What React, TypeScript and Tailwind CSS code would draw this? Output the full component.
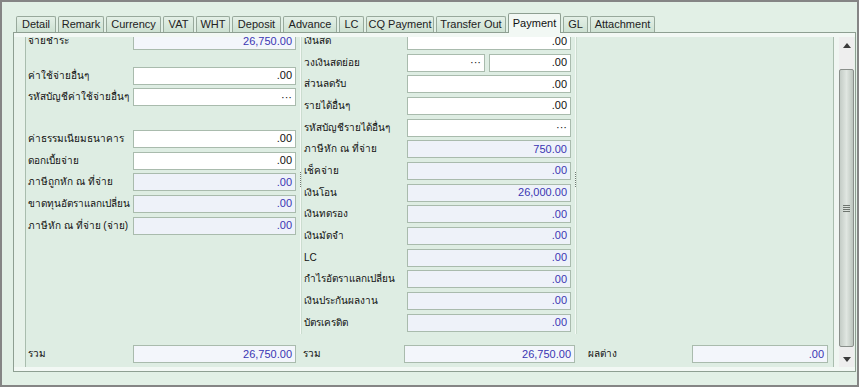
import React from "react";

type Kind = "edit" | "ro" | "sum";

const tabs = [
  { name: "Detail", w: "w-[40px]" },
  { name: "Remark", w: "w-[46px]" },
  { name: "Currency", w: "w-[55px]" },
  { name: "VAT", w: "w-[31px]" },
  { name: "WHT", w: "w-[34px]" },
  { name: "Deposit", w: "w-[49px]" },
  { name: "Advance", w: "w-[54px]" },
  { name: "LC", w: "w-[25px]" },
  { name: "CQ Payment", w: "w-[68px]" },
  { name: "Transfer Out", w: "w-[70px]" },
  { name: "Payment", w: "w-[53px]", active: true },
  { name: "GL", w: "w-[25px]" },
  { name: "Attachment", w: "w-[65px]" },
];

// one text box, right aligned like the desktop form
const Box: React.FC<{ value: string; kind: Kind; w: string }> = ({ value, kind, w }) => {
  const tone =
    kind === "edit"
      ? "bg-white text-[#111]"
      : kind === "sum"
      ? "bg-[#f3f6fb] text-[#3a35b3]"
      : "bg-[#eef2f9] text-[#3a35b3]";
  return (
    <div
      className={`${w} h-[18px] shrink-0 border border-[#a9bbad] ${tone} flex items-center justify-end pr-[3px] text-[11px] leading-none`}
    >
      {value}
    </div>
  );
};

const Row: React.FC<{ label: string; lw: string; children: React.ReactNode; extra?: string }> = ({
  label,
  lw,
  children,
  extra = "",
}) => (
  <div className={`flex items-center h-[18px] ${extra}`}>
    <div className={`${lw} shrink-0 whitespace-nowrap text-[10px] leading-none text-[#111]`}>{label}</div>
    {children}
  </div>
);

const Grip = () => (
  <div className="w-[2px] shrink-0 flex flex-col bg-[#f4f9f5] border-r border-[#cbdccf]">
    <div className="h-[135px]" />
    <div className="h-[15px] border-l border-dotted border-[#6f7a72]" />
  </div>
);

const Arrow: React.FC<{ up?: boolean }> = ({ up }) => (
  <svg width="8" height="5" viewBox="0 0 8 5">
    <polygon points={up ? "0,5 8,5 4,0" : "0,0 8,0 4,5"} fill="#3b3b3b" />
  </svg>
);

export default function App() {
  return (
    <div className="w-[859px] h-[387px] overflow-hidden bg-[#e2f0e6] border-2 border-[#858585] flex flex-col font-['Liberation_Sans','Noto_Sans',sans-serif] text-black">
      {/* tab strip */}
      <div className="h-[30px] shrink-0 flex items-end gap-[2px] pl-[14px] relative z-10">
        {tabs.map((t) =>
          t.active ? (
            <div
              key={t.name}
              className={`${t.w} h-[20px] -mb-[1px] border border-b-0 border-[#8e9f92] bg-[#f2f8f4] flex items-center justify-center text-[11px] text-[#111] rounded-t-[2px]`}
            >
              {t.name}
            </div>
          ) : (
            <div
              key={t.name}
              className={`${t.w} h-[16px] border border-b-0 border-[#98a99c] bg-gradient-to-b from-[#e4f0e7] to-[#cde1d2] flex items-center justify-center text-[11px] text-[#222] rounded-t-[2px]`}
            >
              {t.name}
            </div>
          )
        )}
      </div>

      {/* tab page */}
      <div className="ml-[11px] mr-[1px] h-[340px] shrink-0 border border-[#8e9f92] bg-[#e7f2ea] flex flex-col">
        <div className="h-[4px] bg-[#f2f8f4]" />
        <div className="h-[330px] flex pl-[11px]">
          <div className="w-[809px] border-l border-r border-[#a9bdae] bg-[#deede3] flex flex-col">
            {/* columns */}
            <div className="h-[297px] flex overflow-hidden">
              {/* left */}
              <div className="w-[274px] shrink-0 pl-[2px] pr-[3px]">
                <div className="-mt-[5px] flex flex-col gap-[3.67px]">
                  <Row label="จ่ายชำระ" lw="w-[105px]">
                    <Box value="26,750.00" kind="sum" w="w-[163px]" />
                  </Row>
                  <Row label="ค่าใช้จ่ายอื่นๆ" lw="w-[105px]" extra="mt-[13px]">
                    <Box value=".00" kind="edit" w="w-[163px]" />
                  </Row>
                  <Row label="รหัสบัญชีค่าใช้จ่ายอื่นๆ" lw="w-[105px]">
                    <Box value="···" kind="edit" w="w-[163px]" />
                  </Row>
                  <Row label="ค่าธรรมเนียมธนาคาร" lw="w-[105px]" extra="mt-[20px]">
                    <Box value=".00" kind="edit" w="w-[163px]" />
                  </Row>
                  <Row label="ดอกเบี้ยจ่าย" lw="w-[105px]">
                    <Box value=".00" kind="edit" w="w-[163px]" />
                  </Row>
                  <Row label="ภาษีถูกหัก ณ ที่จ่าย" lw="w-[105px]">
                    <Box value=".00" kind="ro" w="w-[163px]" />
                  </Row>
                  <Row label="ขาดทุนอัตราแลกเปลี่ยน" lw="w-[105px]">
                    <Box value=".00" kind="ro" w="w-[163px]" />
                  </Row>
                  <Row label="ภาษีหัก ณ ที่จ่าย (จ่าย)" lw="w-[105px]">
                    <Box value=".00" kind="ro" w="w-[163px]" />
                  </Row>
                </div>
              </div>

              <Grip />

              {/* middle */}
              <div className="w-[273px] shrink-0 pl-[2px] pr-[4px]">
                <div className="-mt-[5px] flex flex-col gap-[3.67px]">
                  <Row label="เงินสด" lw="w-[103px]">
                    <Box value=".00" kind="edit" w="w-[164px]" />
                  </Row>
                  <Row label="วงเงินสดย่อย" lw="w-[103px]">
                    <Box value="···" kind="edit" w="w-[78px]" />
                    <div className="w-[4px] shrink-0" />
                    <Box value=".00" kind="edit" w="w-[82px]" />
                  </Row>
                  <Row label="ส่วนลดรับ" lw="w-[103px]">
                    <Box value=".00" kind="edit" w="w-[164px]" />
                  </Row>
                  <Row label="รายได้อื่นๆ" lw="w-[103px]">
                    <Box value=".00" kind="edit" w="w-[164px]" />
                  </Row>
                  <Row label="รหัสบัญชีรายได้อื่นๆ" lw="w-[103px]">
                    <Box value="···" kind="edit" w="w-[164px]" />
                  </Row>
                  <Row label="ภาษีหัก ณ ที่จ่าย" lw="w-[103px]">
                    <Box value="750.00" kind="ro" w="w-[164px]" />
                  </Row>
                  <Row label="เช็คจ่าย" lw="w-[103px]">
                    <Box value=".00" kind="ro" w="w-[164px]" />
                  </Row>
                  <Row label="เงินโอน" lw="w-[103px]">
                    <Box value="26,000.00" kind="ro" w="w-[164px]" />
                  </Row>
                  <Row label="เงินทดรอง" lw="w-[103px]">
                    <Box value=".00" kind="ro" w="w-[164px]" />
                  </Row>
                  <Row label="เงินมัดจำ" lw="w-[103px]">
                    <Box value=".00" kind="ro" w="w-[164px]" />
                  </Row>
                  <Row label="LC" lw="w-[103px]">
                    <Box value=".00" kind="ro" w="w-[164px]" />
                  </Row>
                  <Row label="กำไรอัตราแลกเปลี่ยน" lw="w-[103px]">
                    <Box value=".00" kind="ro" w="w-[164px]" />
                  </Row>
                  <Row label="เงินประกันผลงาน" lw="w-[103px]">
                    <Box value=".00" kind="ro" w="w-[164px]" />
                  </Row>
                  <Row label="บัตรเครดิต" lw="w-[103px]">
                    <Box value=".00" kind="ro" w="w-[164px]" />
                  </Row>
                </div>
              </div>

              <Grip />

              {/* right, empty */}
              <div className="flex-1" />
            </div>

            {/* totals */}
            <div className="h-[33px] flex items-start pt-[11px] pl-[2px]">
              <Row label="รวม" lw="w-[105px]">
                <Box value="26,750.00" kind="sum" w="w-[163px]" />
              </Row>
              <Row label="รวม" lw="w-[101px]" extra="ml-[7px]">
                <Box value="26,750.00" kind="sum" w="w-[171px]" />
              </Row>
              <Row label="ผลต่าง" lw="w-[104px]" extra="ml-[13px]">
                <Box value=".00" kind="sum" w="w-[136px]" />
              </Row>
            </div>
          </div>

          <div className="w-[5px] bg-[#f0f6f2]" />

          {/* scrollbar */}
          <div className="w-[15px] bg-[#eeeeee] flex flex-col">
            <div className="h-[17px] flex items-center justify-center">
              <Arrow up />
            </div>
            <div className="h-[15px]" />
            <div className="h-[278px] border border-[#8a8f8b] rounded-[2px] bg-gradient-to-r from-[#c4ccc6] via-[#e0e6e1] to-[#bcc5be] flex items-center justify-center">
              <div className="w-[7px] flex flex-col gap-[1px]">
                <div className="h-[1px] bg-[#6e756f]" />
                <div className="h-[1px] bg-[#6e756f]" />
                <div className="h-[1px] bg-[#6e756f]" />
                <div className="h-[1px] bg-[#6e756f]" />
              </div>
            </div>
            <div className="h-[5px]" />
            <div className="h-[15px] flex items-center justify-center">
              <Arrow />
            </div>
          </div>
          <div className="w-[1px]" />
        </div>
        <div className="h-[4px] bg-[#f2f8f4]" />
      </div>
    </div>
  );
}
